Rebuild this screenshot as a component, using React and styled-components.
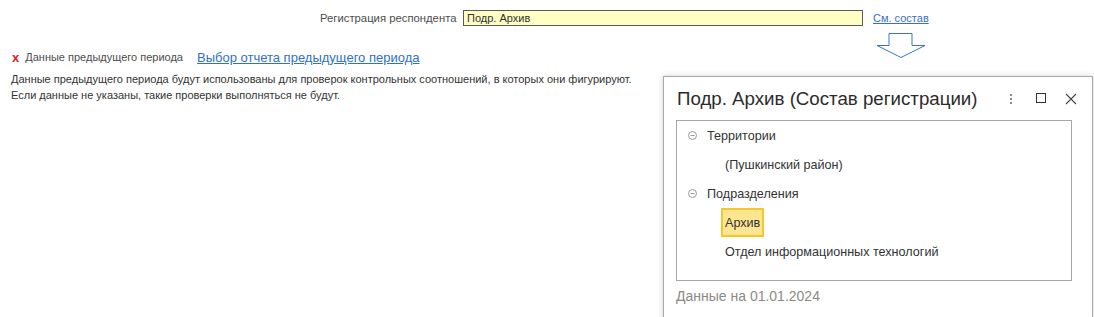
import React from "react";
import styled, { createGlobalStyle } from "styled-components";

const GlobalStyle = createGlobalStyle`
	body {
		margin: 0;
		background: #fff;
		font-family: "Liberation Sans", Arial, sans-serif;
		color: #333;
	}
`;

function App() {
	return (
		<Page>
			<GlobalStyle />
			<Header>
				<Label $size={11.3}>Регистрация респондента</Label>
				<Field>Подр. Архив</Field>
				<SmallLink>См. состав</SmallLink>
			</Header>
			<Main>
				<Left>
					<ErrorRow>
						<Cross>x</Cross>
						<Label $size={11}>Данные предыдущего периода</Label>
						<BigLink>Выбор отчета предыдущего периода</BigLink>
					</ErrorRow>
					<Note>
						Данные предыдущего периода будут использованы для проверок контрольных
						соотношений, в которых они фигурируют.
						<br />
						Если данные не указаны, такие проверки выполняться не будут.
					</Note>
				</Left>
				<Right>
					<Arrow width="50" height="26" viewBox="0 0 50 26">
						<path
							d="M13 1.5H36V13.5H49L25 25.5L1 13.5H13Z"
							fill="none"
							stroke="#3a70d4"
							strokeWidth="1"
						/>
					</Arrow>
					<Popup>
						<TitleBar>
							<Title>Подр. Архив (Состав регистрации)</Title>
							<Tools>
								<ToolBtn>
									<svg width="4" height="12" viewBox="0 0 4 12">
										<rect x="1" y="1" width="2" height="2" fill="#8a8a8a" />
										<rect x="1" y="5" width="2" height="2" fill="#8a8a8a" />
										<rect x="1" y="9" width="2" height="2" fill="#8a8a8a" />
									</svg>
								</ToolBtn>
								<ToolBtn>
									<svg width="11" height="11" viewBox="0 0 11 11">
										<rect x="0.5" y="0.5" width="9" height="9" fill="none" stroke="#333" />
									</svg>
								</ToolBtn>
								<ToolBtn>
									<svg width="12" height="12" viewBox="0 0 12 12">
										<path d="M1 1L11 11M11 1L1 11" stroke="#444" strokeWidth="1.1" />
									</svg>
								</ToolBtn>
							</Tools>
						</TitleBar>
						<TreeBox>
							<Group>
								<Collapse />
								<span>Территории</span>
							</Group>
							<Item>
								<ItemText>(Пушкинский район)</ItemText>
							</Item>
							<Group>
								<Collapse />
								<span>Подразделения</span>
							</Group>
							<Item>
								<ItemText $selected>Архив</ItemText>
							</Item>
							<Item>
								<ItemText>Отдел информационных технологий</ItemText>
							</Item>
						</TreeBox>
						<Footer>Данные на 01.01.2024</Footer>
					</Popup>
				</Right>
			</Main>
		</Page>
	);
}

function Collapse() {
	return (
		<CollapseIcon width="9" height="9" viewBox="0 0 9 9">
			<circle cx="4.5" cy="4.5" r="4" fill="none" stroke="#999" />
			<path d="M2.5 4.5H6.5" stroke="#999" />
		</CollapseIcon>
	);
}

const Page = styled.div`
	width: 1094px;
	height: 317px;
	overflow: hidden;
`;

const Header = styled.div`
	display: grid;
	grid-template-columns: 143px 400px auto;
	align-items: center;
	padding: 10px 0 0 320px;
	height: 16px;
`;

const Label = styled.span`
	font-size: ${(p) => p.$size}px;
	color: #4d4d4d;
	white-space: nowrap;
`;

const Field = styled.div`
	box-sizing: border-box;
	height: 16px;
	border: 1px solid #5a5a5a;
	background: #ffffc4;
	font-size: 11px;
	line-height: 14px;
	padding-left: 3px;
	color: #333;
`;

const SmallLink = styled.a`
	margin-left: 10px;
	font-size: 11px;
	color: #3a6fc8;
	text-decoration: underline;
	white-space: nowrap;
`;

const Main = styled.div`
	display: grid;
	grid-template-columns: 663px 1fr;
`;

const Left = styled.div`
	padding: 22px 0 0 11px;
`;

const ErrorRow = styled.div`
	display: flex;
	align-items: center;
	height: 18px;
`;

const Cross = styled.span`
	font-size: 13px;
	font-weight: 700;
	color: #e02020;
	margin: 0 6px 0 1px;
	line-height: 1;
`;

const BigLink = styled.a`
	margin-left: 14px;
	font-size: 13px;
	color: #2f6fcf;
	text-decoration: underline;
	white-space: nowrap;
`;

const Note = styled.p`
	margin: 5px 0 0;
	font-size: 11px;
	line-height: 16px;
	color: #333;
`;

const Right = styled.div`
	display: flex;
	flex-direction: column;
	align-items: flex-start;
`;

const Arrow = styled.svg`
	display: block;
	margin: 6px 0 0 213px;
`;

const Popup = styled.div`
	box-sizing: border-box;
	margin-top: 18px;
	width: 430px;
	height: 245px;
	border: 1px solid #a8a8a8;
	background: #fff;
	box-shadow: 0 0 6px rgba(0, 0, 0, 0.18);
	padding: 0 20px 0 12px;
`;

const TitleBar = styled.div`
	display: flex;
	align-items: center;
	height: 43px;
	padding-left: 1px;
`;

const Title = styled.div`
	font-size: 18.7px;
	color: #2b2b2b;
	white-space: nowrap;
	flex: 1;
`;

const Tools = styled.div`
	display: flex;
	align-items: center;
	gap: 18px;
	margin-right: -5px;
`;

const ToolBtn = styled.span`
	display: flex;
	align-items: center;
	justify-content: center;
	width: 12px;
	height: 14px;
`;

const TreeBox = styled.div`
	box-sizing: border-box;
	height: 161px;
	border: 1px solid #a6a6a6;
	padding: 0 0 0 10px;
`;

const Group = styled.div`
	display: flex;
	align-items: center;
	height: 29px;
	font-size: 12.6px;
	color: #333;

	span {
		margin-left: 10px;
	}
`;

const CollapseIcon = styled.svg`
	display: block;
	margin-left: 1px;
`;

const Item = styled.div`
	display: flex;
	align-items: center;
	height: 29px;
	padding-left: 34px;
	font-size: 12.6px;
	color: #333;
`;

const ItemText = styled.span`
	box-sizing: border-box;
	display: flex;
	align-items: center;
	height: 29px;
	padding: 0 2px;
	border: 2px solid ${(p) => (p.$selected ? "#f6c62a" : "transparent")};
	background: ${(p) => (p.$selected ? "#fde692" : "transparent")};
	white-space: nowrap;
`;

const Footer = styled.div`
	padding-top: 7px;
	font-size: 14px;
	color: #8c8a85;
`;

export default App;
